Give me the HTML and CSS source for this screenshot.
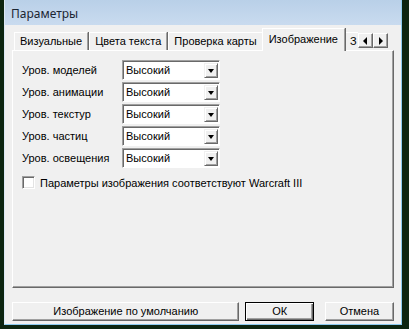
FILE: index.html
```html
<!DOCTYPE html>
<html>

<head>
    <meta charset="utf-8">
    <link rel="stylesheet" href="styles.css">
</head>

<body>
    <section class="window">
        <header class="titlebar">Параметры</header>
        <section class="client">
            <nav class="tabs">
                <span class="tab">Визуальные</span>
                <span class="tab">Цвета текста</span>
                <span class="tab">Проверка карты</span>
                <span class="tab selected">Изображение</span>
                <span class="tab clipped">З</span>
                <span class="scroller">
                    <span class="arrow left"></span>
                    <span class="arrow right"></span>
                </span>
            </nav>
            <section class="panel">
                <div class="row">
                    <label>Уров. моделей</label>
                    <span class="combo">Высокий<span class="drop"></span></span>
                </div>
                <div class="row">
                    <label>Уров. анимации</label>
                    <span class="combo">Высокий<span class="drop"></span></span>
                </div>
                <div class="row">
                    <label>Уров. текстур</label>
                    <span class="combo">Высокий<span class="drop"></span></span>
                </div>
                <div class="row">
                    <label>Уров. частиц</label>
                    <span class="combo">Высокий<span class="drop"></span></span>
                </div>
                <div class="row">
                    <label>Уров. освещения</label>
                    <span class="combo">Высокий<span class="drop"></span></span>
                </div>
                <label class="check">
                    <span class="box"></span>
                    Параметры изображения соответствуют Warcraft III
                </label>
            </section>
            <footer class="buttons">
                <span class="btn wide">Изображение по умолчанию</span>
                <span class="btn default">ОК</span>
                <span class="btn">Отмена</span>
            </footer>
        </section>
    </section>
</body>

</html>
```

FILE: styles.css
```css
body {
    margin: 0;
    background: #0c2510;
    font-family: 'Liberation Sans', Arial, sans-serif;
    font-size: 11px;
    color: #000;
}

.window {
    margin-left: 4px;
    width: 396px;
    height: 324px;
    border: 1px solid #8ccbef;
    border-top: 0 none;
    border-left-color: #dbe8f5;
    background: #f0f0f0;
    display: flex;
    flex-direction: column;
}

.titlebar {
    height: 25px;
    line-height: 27px;
    padding-left: 6px;
    background: linear-gradient(#b9d0e8, #c9dbef);
    font-family: 'Noto Sans', sans-serif;
    font-size: 12px;
    color: #1b2633;
}

.client {
    padding: 0 7px 0 7px;
    flex: 1;
    display: flex;
    flex-direction: column;
}

/* tab strip */
.tabs {
    height: 25px;
    display: flex;
    align-items: flex-end;
    padding-left: 2px;
    position: relative;
}

.tab {
    height: 17px;
    line-height: 17px;
    padding: 0 5px 0 5px;
    border-top: 1px solid #fff;
    border-left: 1px solid #fff;
    border-right: 1px solid #a0a0a0;
    box-shadow: 1px 0 0 #696969;
    margin-right: 1px;
    white-space: nowrap;
}

.tab.selected {
    height: 22px;
    line-height: 20px;
    margin: 0 -1px 0 -2px;
    padding: 0 6px 0 6px;
    position: relative;
    z-index: 1;
    margin-bottom: -1px;
    background: #f0f0f0;
}

.tab.clipped {
    padding: 0 1px 0 5px;
    margin-right: 0;
    border-right: 0 none;
    box-shadow: none;
}

.scroller {
    display: flex;
    margin-bottom: 2px;
}

.arrow {
    width: 13px;
    height: 13px;
    border-top: 1px solid #fff;
    border-left: 1px solid #fff;
    border-right: 1px solid #696969;
    border-bottom: 1px solid #696969;
    box-shadow: inset -1px -1px 0 #a0a0a0;
    background: #f0f0f0;
    position: relative;
}

.arrow::after {
    content: "";
    position: absolute;
    top: 3px;
    border-top: 4px solid transparent;
    border-bottom: 4px solid transparent;
}

.arrow.left::after {
    left: 4px;
    border-right: 4px solid #000;
}

.arrow.right::after {
    left: 5px;
    border-left: 4px solid #000;
}

/* panel */
.panel {
    border-top: 1px solid #fff;
    border-left: 1px solid #fff;
    border-right: 1px solid #696969;
    border-bottom: 1px solid #696969;
    box-shadow: inset -1px -1px 0 #a0a0a0;
    padding: 8px 0 0 9px;
    box-sizing: border-box;
    height: 238px;
}

.row {
    display: flex;
    align-items: center;
    height: 22px;
}

.row label {
    width: 100px;
}

.combo {
    width: 98px;
    height: 20px;
    box-sizing: border-box;
    background: #fff;
    border-top: 1px solid #a0a0a0;
    border-left: 1px solid #a0a0a0;
    border-right: 1px solid #fff;
    border-bottom: 1px solid #fff;
    box-shadow: inset 1px 1px 0 #696969;
    padding: 0 0 0 3px;
    line-height: 18px;
    display: flex;
    justify-content: space-between;
}

.drop {
    width: 14px;
    height: 15px;
    margin: 2px 1px 0 0;
    border-top: 1px solid #f0f0f0;
    border-left: 1px solid #f0f0f0;
    border-right: 1px solid #696969;
    border-bottom: 1px solid #696969;
    box-shadow: inset 1px 1px 0 #fff, inset -1px -1px 0 #a0a0a0;
    background: #f0f0f0;
    box-sizing: border-box;
    position: relative;
}

.drop::after {
    content: "";
    position: absolute;
    left: 3px;
    top: 5px;
    border-left: 3.5px solid transparent;
    border-right: 3.5px solid transparent;
    border-top: 4px solid #000;
}

.check {
    display: flex;
    align-items: center;
    gap: 5px;
    margin-top: 7px;
}

.box {
    width: 13px;
    height: 13px;
    box-sizing: border-box;
    background: #fff;
    border-top: 1px solid #a0a0a0;
    border-left: 1px solid #a0a0a0;
    border-right: 1px solid #fff;
    border-bottom: 1px solid #fff;
    box-shadow: inset 1px 1px 0 #696969, inset -1px -1px 0 #e3e3e3;
}

/* bottom buttons */
.buttons {
    display: flex;
    margin-top: 14px;
    gap: 6px;
}

.btn {
    height: 19px;
    box-sizing: border-box;
    line-height: 17px;
    text-align: center;
    border-top: 1px solid #fff;
    border-left: 1px solid #fff;
    border-right: 1px solid #696969;
    border-bottom: 1px solid #696969;
    box-shadow: inset -1px -1px 0 #a0a0a0;
    width: 70px;
}

.btn.wide {
    width: 230px;
}

.btn.default {
    width: 69px;
    border: 1px solid #000;
    box-shadow: inset 1px 1px 0 #fff, inset -1px -1px 0 #696969, inset -2px -2px 0 #a0a0a0;
    margin-right: 5px;
}
```
